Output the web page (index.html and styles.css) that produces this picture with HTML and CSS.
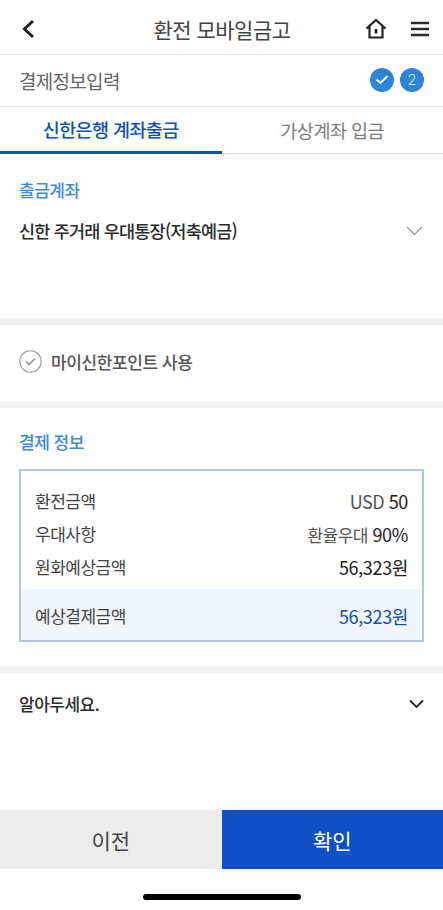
FILE: index.html
```html
<!DOCTYPE html>
<html lang="ko">
<head>
<meta charset="utf-8">
<title>환전 모바일금고</title>
<link rel="stylesheet" href="styles.css">
</head>
<body>
<div class="page">
  <header class="topbar">
    <svg class="back" width="14" height="20" viewBox="0 0 14 20"><path d="M12 2 3.500 10 12 18" fill="none" stroke="#222" stroke-width="3"/></svg>
    <h1 class="title">환전 모바일금고</h1>
    <svg class="home" width="22" height="22" viewBox="0 0 22 22"><path d="M1.500 10.500 11 2l9.500 8.500M4.500 8.500V19.500h13V8.500" fill="none" stroke="#222" stroke-width="2.200"/><rect x="9.700" y="11" width="2.600" height="4.500" fill="#222"/></svg>
    <svg class="menu" width="18" height="16" viewBox="0 0 18 16"><path d="M0 2h18M0 8h18M0 14h18" stroke="#2a2a2a" stroke-width="2.600"/></svg>
  </header>
  <div class="steps">
    <span class="steps-label">결제정보입력</span>
    <span class="step-dots">
      <span class="dot"><svg width="14" height="11" viewBox="0 0 14 11"><path d="M1.500 5.500 5.500 9 12.500 2" fill="none" stroke="#fff" stroke-width="2"/></svg></span>
      <span class="dot dot-num">2</span>
    </span>
  </div>
  <nav class="tabs">
    <span class="tab tab-on">신한은행 계좌출금</span>
    <span class="tab">가상계좌 입금</span>
  </nav>
  <section class="account">
    <h2 class="label">출금계좌</h2>
    <div class="account-row">
      <span class="account-name">신한 주거래 우대통장(저축예금)</span>
      <svg width="17" height="10" viewBox="0 0 17 10"><path d="M1 1l7.500 7.500L16 1" fill="none" stroke="#8a8f96" stroke-width="1.100"/></svg>
    </div>
  </section>
  <section class="points">
    <svg width="23" height="23" viewBox="0 0 23 23"><circle cx="11.500" cy="11.500" r="10.700" fill="none" stroke="#9a9a9a" stroke-width="1.100"/><path d="M7 11.500l3.200 3L16 8.500" fill="none" stroke="#8a8a8a" stroke-width="1.300"/></svg>
    <span class="points-text">마이신한포인트 사용</span>
  </section>
  <section class="payment">
    <h2 class="label">결제 정보</h2>
    <div class="box">
      <div class="rows">
        <div class="row"><span>환전금액</span><span class="val-light">USD <span class="num">50</span></span></div>
        <div class="row"><span>우대사항</span><span class="val-light"><span class="val-ko">환율우대</span> <span class="num">90%</span></span></div>
        <div class="row"><span>원화예상금액</span><span class="num">56,323원</span></div>
      </div>
      <div class="row total"><span>예상결제금액</span><span class="num blue">56,323원</span></div>
    </div>
  </section>
  <section class="notice">
    <span class="notice-text">알아두세요.</span>
    <svg width="15" height="10" viewBox="0 0 15 10"><path d="M1 1.500l6.500 6.500L14 1.500" fill="none" stroke="#222" stroke-width="1.800"/></svg>
  </section>
  <footer class="actions">
    <button class="btn btn-prev">이전</button>
    <button class="btn btn-ok">확인</button>
  </footer>
  <div class="home-zone"><span class="indicator"></span></div>
</div>
</body>
</html>
```

FILE: styles.css
```css
* { box-sizing: border-box; margin: 0; padding: 0; }
html, body { height: 100%; background: #fff; }
body {
  font-family: "Noto Sans CJK KR", "Noto Sans", sans-serif;
  color: #333;
  overflow: hidden;
}
.page { width: 443px; height: 910px; display: flex; flex-direction: column; }

.topbar {
  height: 55px;
  flex: none;
  display: flex;
  align-items: center;
  padding: 3px 14px 0 21px;
  border-bottom: 1px solid #e2e2e2;
}
.back { flex: none; }
.title {
  flex: 1;
  text-align: center;
  font-size: 21px;
  font-weight: 400;
  letter-spacing: -0.5px;
  color: #444;
  padding-left: 44px;
}
.home { flex: none; margin-right: 24px; }
.menu { flex: none; }

.steps {
  height: 52px;
  flex: none;
  display: flex;
  align-items: center;
  justify-content: space-between;
  padding: 0 19px;
  border-bottom: 1px solid #e2e2e2;
}
.steps-label { font-size: 19px; letter-spacing: -0.7px; color: #666; }
.step-dots { display: flex; gap: 6px; margin-bottom: 2px; }
.dot {
  width: 24px;
  height: 24px;
  border-radius: 50%;
  background: #2e84d8;
  color: #e8f2fc;
  display: flex;
  align-items: center;
  justify-content: center;
}
.dot-num { font-family: Roboto, sans-serif; font-size: 15px; font-weight: 300; }

.tabs {
  height: 47px;
  flex: none;
  display: flex;
  border-bottom: 1px solid #dcdcdc;
}
.tab {
  flex: 1;
  font-size: 18.500px;
  letter-spacing: -0.5px;
  color: #7c7c7c;
  display: flex;
  align-items: center;
  justify-content: center;
}
.tab-on {
  color: #124fc0;
  font-weight: 500;
  letter-spacing: -0.6px;
  border-bottom: 3px solid #124fc0;
  height: 47px;
}

.account { height: 171px; flex: none; padding: 24px 19px 0; border-bottom: 7px solid #f2f2f2; }
.label { font-size: 17px; font-weight: 500; color: #3d8bd9; letter-spacing: -0.5px; line-height: 24px; }
.account-row {
  margin-top: 16px;
  display: flex;
  align-items: center;
  justify-content: space-between;
  padding-right: 1px;
}
.account-name { font-size: 17.500px; font-weight: 500; color: #2c2c2c; letter-spacing: -0.8px; }

.points {
  height: 83px;
  flex: none;
  display: flex;
  align-items: center;
  gap: 9px;
  padding: 0 19px 4px;
  border-bottom: 7px solid #f2f2f2;
}
.points-text { font-size: 17px; font-weight: 500; color: #555; letter-spacing: -0.4px; }

.payment { height: 265px; flex: none; padding: 22px 19px 0; border-bottom: 7px solid #f2f2f2; }
.box { margin-top: 15px; border: 2px solid #b4c5e3; height: 173px; display: flex; flex-direction: column; }
.rows { flex: 1; padding: 13px 0 0; display: flex; flex-direction: column; }
.row {
  display: flex;
  justify-content: space-between;
  align-items: center;
  height: 33px;
  padding: 0 14px;
  font-size: 17px;
  letter-spacing: -0.5px;
  color: #444;
}
.val-light { color: #555; font-size: 18px; letter-spacing: -0.5px; }
.val-ko { font-size: 17px; }
.num { font-size: 18px; color: #222; letter-spacing: -0.35px; font-weight: 400; }
.blue { color: #124fa8; }
.total { height: 51px; background: #f1f6fd; flex: none; padding-top: 2px; }

.notice {
  height: 63px;
  flex: none;
  display: flex;
  align-items: center;
  justify-content: space-between;
  padding: 0 19px 2px;
}
.notice-text { font-size: 17px; font-weight: 500; color: #2c2c2c; letter-spacing: -0.5px; }

.actions { margin-top: 74px; height: 59px; flex: none; display: flex; }
.btn { flex: 1; border: 0; font-family: inherit; font-size: 21px; }
.btn-prev { background: #ececec; color: #444; }
.btn-ok { background: #0f50c4; color: #fff; }

.home-zone { flex: 1; display: flex; justify-content: center; padding-top: 25px; }
.indicator { width: 158px; height: 6px; border-radius: 3px; background: #000; }
```
